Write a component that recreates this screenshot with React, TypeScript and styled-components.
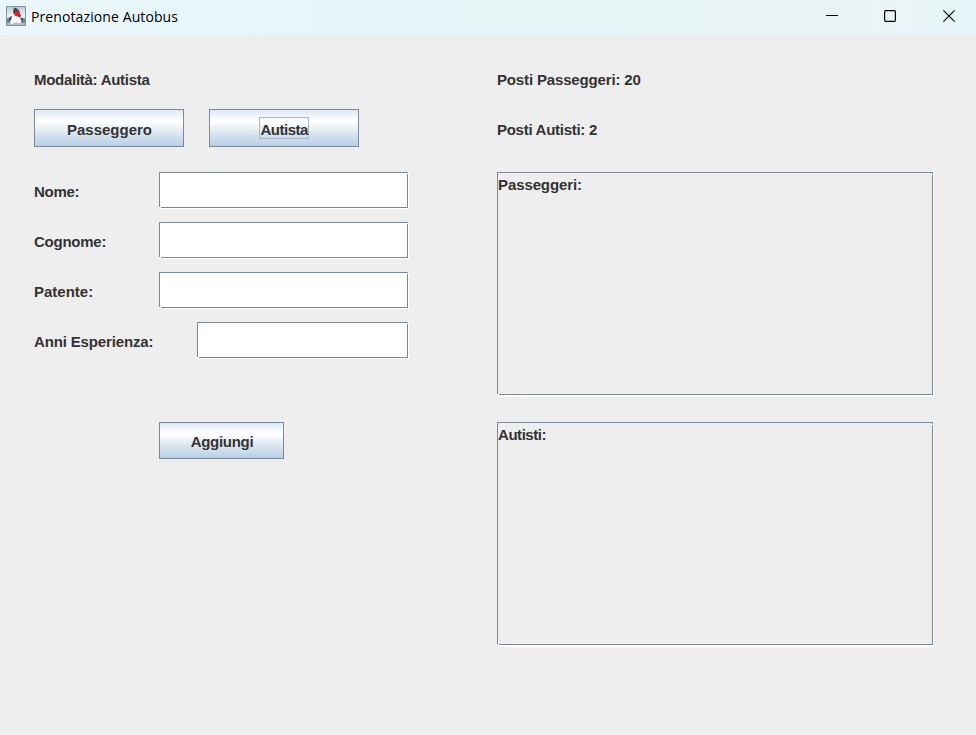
import React from 'react';
import styled, { createGlobalStyle, css } from 'styled-components';

const GlobalStyle = createGlobalStyle`
  *, *::before, *::after { box-sizing: border-box; }
  body { margin: 0; background: #eeeeee; overflow: hidden; }
`;

const Window = styled.div`
  width: 976px;
  height: 735px;
  display: flex;
  flex-direction: column;
  background: #eeeeee;
  color: #333333;
  font: bold 15px/20px 'Liberation Sans', Arial, sans-serif;
`;

const TitleBar = styled.header`
  height: 35px;
  flex: none;
  display: flex;
  align-items: center;
  padding-left: 6px;
  background: linear-gradient(90deg, #eaf7fc 0%, #e5f6f8 35%, #e6f5f5 65%, #ebf4f4 85%, #e6f5f7 100%);
`;

const Title = styled.span`
  flex: 1;
  margin: -2px 0 0 5px;
  color: #000;
  font: 14px/20px 'Open Sans', 'Noto Sans', sans-serif;
  letter-spacing: 0.1px;
`;

const AppIcon = styled.svg`
  width: 20px;
  height: 20px;
  margin-top: -3px;
`;

const Controls = styled.div`
  display: flex;
  height: 32px;
  align-self: flex-start;
  margin-right: -3px;
`;

const ControlButton = styled.button<{ $width: number }>`
  width: ${(p) => p.$width}px;
  padding: 0;
  border: 0;
  background: none;
  display: flex;
  align-items: center;
  justify-content: center;
`;

const Content = styled.main`
  display: grid;
  grid-template-columns: 374px 437px;
  column-gap: 89px;
  padding: 35px 0 0 34px;
`;

const Column = styled.section`
  display: flex;
  flex-direction: column;
`;

const Label = styled.div<{ $width: number; $spacing?: number }>`
  width: ${(p) => p.$width}px;
  height: 20px;
  flex: none;
  white-space: nowrap;
  letter-spacing: ${(p) => p.$spacing ?? 0}px;
`;

const FieldLabel = styled(Label)`
  margin-top: 2px;
`;

const ModeRow = styled.div`
  display: flex;
  gap: 25px;
  margin: 19px 0 25px;
`;

const MetalButton = styled.button<{ $width: number; $height: number; $spacing?: number }>`
  width: ${(p) => p.$width}px;
  height: ${(p) => p.$height}px;
  display: flex;
  align-items: center;
  justify-content: center;
  padding: 3px 0 0 1px;
  border: 1px solid #7a8a99;
  background: linear-gradient(180deg, #dde8f3 0%, #ffffff 30%, #ffffff 33%, #dae5f0 65%, #b8cfe5 100%);
  color: #333333;
  font: inherit;
  letter-spacing: ${(p) => p.$spacing ?? 0}px;
`;

const FocusFrame = styled.span`
  width: 50px;
  height: 22px;
  margin: -3px 2px 0 0;
  padding: 2px 0 0 1px;
  border: 1px solid #a3b8cc;
  line-height: 20px;
  text-align: left;
  white-space: nowrap;
`;

const Form = styled.div`
  display: grid;
  row-gap: 13px;
`;

const FormRow = styled.label`
  display: flex;
  align-items: center;
  height: 37px;
`;

/* Outline with small notches at the top-right and bottom-left corners. */
const etched = (notch: number, fill: string) => css`
  border: 1px solid transparent;
  background:
    linear-gradient(#7a8a99, #7a8a99) left top / calc(100% - ${2 - notch}px) 1px no-repeat border-box,
    linear-gradient(#7a8a99, #7a8a99) left top / 1px calc(100% - 1px) no-repeat border-box,
    linear-gradient(#7a8a99 0 ${notch}px, #fff ${notch}px ${notch + 1}px, #7a8a99 ${notch + 1}px) right top / 1px 100% no-repeat border-box,
    linear-gradient(90deg, #fff 0 2px, #7a8a99 2px) left bottom / 100% 1px no-repeat border-box,
    linear-gradient(${fill}, ${fill}) border-box;
`;

const TextField = styled.input<{ $width: number }>`
  width: ${(p) => p.$width}px;
  height: 36px;
  margin: -1px 0 0;
  padding: 0 4px;
  border-radius: 0;
  outline: none;
  ${etched(1, '#ffffff')}
  box-shadow: 1px 1px 0 #fff;
  font: inherit;
`;

const Submit = styled.div`
  margin: 63px 0 0 125px;
`;

const Pane = styled.section`
  width: 436px;
  height: 223px;
  padding: 2px 0 0;
  ${etched(2, '#eeeeee')}
  box-shadow: 1px 1px 0 #fff, 1px 2px 0 #fff;
`;

const Stat = styled(Label)`
  margin-bottom: 30px;
`;

const Panes = styled.div`
  display: grid;
  row-gap: 27px;
  margin-top: 2px;
`;

const DukeIcon = () => (
  <AppIcon viewBox="0 0 20 20" aria-hidden="true">
    <defs>
      <linearGradient id="tile" x1="0" y1="0" x2="0" y2="1">
        <stop offset="0" stopColor="#bfc9d2" />
        <stop offset=".5" stopColor="#eef2f5" />
        <stop offset="1" stopColor="#a3b2c2" />
      </linearGradient>
    </defs>
    <rect x=".5" y=".5" width="19" height="19" fill="url(#tile)" stroke="#8095ab" />
    <path d="M1 12.5 6 11.5 5 17 1 17ZM14 11.5 19 12.5 19 17 15 17Z" fill="#5b6d80" opacity=".8" />
    <path d="M5.5 9 10 8 14 11 15.5 16.5 12 17 10 16 6 18 4 17Z" fill="#fcfcfc" />
    <path d="M8 1.5Q11 2.2 13 4.5L15 10 13.5 11.5 8 8 7 6Z" fill="#44474b" />
    <path d="M3.5 11 6 10 5.5 13 4 15 2.5 14ZM14.5 11 17 13 17 15 15 14Z" fill="#4b5259" />
    <ellipse cx="11" cy="7.9" rx="2.6" ry="2.4" fill="#f01b22" />
  </AppIcon>
);

const fields = [
  { label: 'Nome:', width: 249, labelWidth: 125, spacing: -0.3 },
  { label: 'Cognome:', width: 249, labelWidth: 125, spacing: -0.25 },
  { label: 'Patente:', width: 249, labelWidth: 125, spacing: 0 },
  { label: 'Anni Esperienza:', width: 211, labelWidth: 163, spacing: -0.15 },
];

export default function App() {
  return (
    <Window>
      <GlobalStyle />
      <TitleBar>
        <DukeIcon />
        <Title>Prenotazione Autobus</Title>
        <Controls>
          <ControlButton $width={58} aria-label="Riduci a icona">
            <svg width="12" height="12"><path d="M0 5.5H12" stroke="#000" /></svg>
          </ControlButton>
          <ControlButton $width={58} aria-label="Ingrandisci">
            <svg width="12" height="12" fill="none" stroke="#000">
              <rect x=".6" y=".6" width="10.8" height="10.8" rx="1.2" strokeWidth="1.2" />
            </svg>
          </ControlButton>
          <ControlButton $width={60} aria-label="Chiudi">
            <svg width="12" height="12"><path d="M.4.4 11.6 11.6M11.6.4.4 11.6" stroke="#000" strokeWidth="1.1" /></svg>
          </ControlButton>
        </Controls>
      </TitleBar>
      <Content>
        <Column>
          <Label $width={200} $spacing={-0.28}>Modalità: Autista</Label>
          <ModeRow>
            <MetalButton $width={150} $height={38}>Passeggero</MetalButton>
            <MetalButton $width={150} $height={38} $spacing={-0.5}><FocusFrame>Autista</FocusFrame></MetalButton>
          </ModeRow>
          <Form>
            {fields.map((f) => (
              <FormRow key={f.label}>
                <FieldLabel as="span" $width={f.labelWidth} $spacing={f.spacing}>{f.label}</FieldLabel>
                <TextField $width={f.width} />
              </FormRow>
            ))}
          </Form>
          <Submit><MetalButton $width={125} $height={37} $spacing={-0.3}>Aggiungi</MetalButton></Submit>
        </Column>
        <Column>
          <Stat $width={300} $spacing={-0.15}>Posti Passeggeri: 20</Stat>
          <Stat $width={300} $spacing={-0.28}>Posti Autisti: 2</Stat>
          <Panes>
            <Pane><Label $width={200} $spacing={-0.1}>Passeggeri:</Label></Pane>
            <Pane><Label $width={200} $spacing={-0.45}>Autisti:</Label></Pane>
          </Panes>
        </Column>
      </Content>
    </Window>
  );
}
